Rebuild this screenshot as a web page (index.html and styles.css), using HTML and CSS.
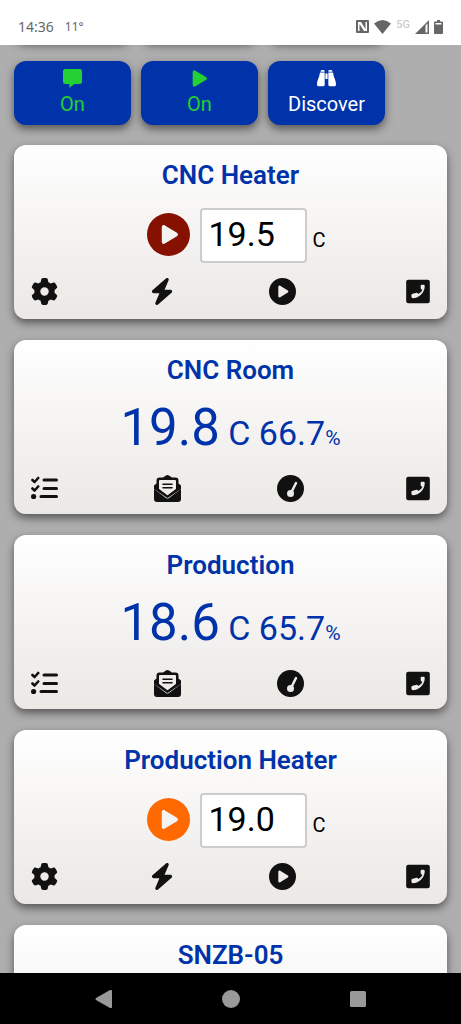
FILE: index.html
```html
<!DOCTYPE html>
<html lang="en">
<head>
<meta charset="utf-8">
<meta name="viewport" content="width=device-width, initial-scale=1">
<title>Heating control</title>
<link rel="stylesheet" href="styles.css">
</head>
<body>
<svg class="sprite" aria-hidden="true">
  <symbol id="gear" viewBox="0 0 512 512"><path d="M495.9 166.6c3.2 8.7 .5 18.4-6.4 24.6l-43.3 39.4c1.1 8.3 1.7 16.8 1.7 25.4s-.6 17.1-1.7 25.4l43.3 39.4c6.9 6.2 9.6 15.9 6.4 24.6c-4.4 11.9-9.7 23.3-15.8 34.3l-4.7 8.1c-6.6 11-14 21.4-22.1 31.2c-5.9 7.2-15.7 9.6-24.5 6.8l-55.7-17.7c-13.4 10.3-28.2 18.9-44 25.4l-12.5 57.1c-2 9.1-9 16.3-18.2 17.8c-13.8 2.3-28 3.5-42.5 3.5s-28.7-1.2-42.5-3.5c-9.2-1.5-16.2-8.7-18.2-17.8l-12.5-57.1c-15.8-6.5-30.6-15.1-44-25.4L83.1 425.9c-8.8 2.8-18.6 .3-24.5-6.8c-8.1-9.8-15.5-20.2-22.1-31.2l-4.7-8.1c-6.1-11-11.4-22.4-15.8-34.3c-3.2-8.7-.5-18.4 6.4-24.6l43.3-39.4C64.6 273.1 64 264.6 64 256s.6-17.1 1.7-25.4L22.4 191.2c-6.9-6.2-9.6-15.9-6.4-24.6c4.4-11.9 9.7-23.3 15.8-34.3l4.7-8.1c6.6-11 14-21.4 22.1-31.2c5.9-7.2 15.7-9.6 24.5-6.8l55.7 17.7c13.4-10.3 28.2-18.9 44-25.4l12.5-57.1c2-9.1 9-16.3 18.2-17.8C227.3 1.2 241.5 0 256 0s28.7 1.2 42.5 3.5c9.2 1.5 16.2 8.7 18.2 17.8l12.5 57.1c15.8 6.5 30.6 15.1 44 25.4l55.7-17.7c8.8-2.8 18.6-.3 24.5 6.8c8.1 9.8 15.5 20.2 22.1 31.2l4.7 8.1c6.1 11 11.4 22.4 15.8 34.3zM256 336a80 80 0 1 0 0-160 80 80 0 1 0 0 160z"/></symbol>
  <symbol id="bolt" viewBox="0 0 448 512"><path d="M349.4 44.6c5.9-13.7 1.5-29.7-10.6-38.5s-28.6-8-39.9 1.8l-256 224c-10 8.8-13.6 22.9-8.9 35.3S50.7 288 64 288H175.5L98.6 467.4c-5.9 13.7-1.5 29.7 10.6 38.5s28.6 8 39.9-1.8l256-224c10-8.8 13.6-22.9 8.9-35.3s-16.6-20.7-30-20.7H272.5L349.4 44.6z"/></symbol>
  <symbol id="circle-play" viewBox="0 0 512 512"><path d="M0 256a256 256 0 1 1 512 0A256 256 0 1 1 0 256zM188.3 147.1c-7.6 4.2-12.3 12.3-12.3 20.9V344c0 8.7 4.7 16.7 12.3 20.9s16.8 4.1 24.3-.5l144-88c7.1-4.4 11.5-12.1 11.5-20.5s-4.4-16.1-11.5-20.5l-144-88c-7.4-4.5-16.7-4.7-24.3-.5z"/></symbol>
  <symbol id="phone" viewBox="0 0 448 512"><path fill-rule="evenodd" d="M40 32H408A40 40 0 0 1 448 72V440A40 40 0 0 1 408 480H40A40 40 0 0 1 0 440V72A40 40 0 0 1 40 32ZM274 146L276 198Q278 212 290 216L309 223Q288 278 229 305L220 290Q212 278 200 281L122 298Q98 304 98 324L101 362Q104 382 122 383C252 380 350 282 352 152Q352 132 334 129L296 126Q276 126 274 146Z"/></symbol>
  <symbol id="checklist" viewBox="0 0 27 27"><g fill="none" stroke="currentColor" stroke-width="3" stroke-linecap="round" stroke-linejoin="round"><path d="M13 5H25.500M13 13.500H25.500M10 21.500H25.500"/><path stroke-width="2.600" d="M1.400 5L3.600 7 7.200 3M1.400 13.500L3.600 15.500 7.200 11.500"/></g><circle cx="2.600" cy="21.500" r="2.600"/></symbol>
  <symbol id="mail" viewBox="0 0 27 27"><path fill-rule="evenodd" d="M0 10.500L2.500 8.500V5.500Q2.500 2.500 5.500 2.500H9L12 .500Q13.500-.5 15 .500L18 2.500H21.500Q24.500 2.500 24.500 5.500V8.500L27 10.500V13L15 21.800Q13.500 23 12 21.800L0 13ZM5 6V14.300L13.500 20.600 22 14.300V6Q22 5 21 5H6Q5 5 5 6Z"/><path d="M0 14L12 23Q13.500 24 15 23L27 14V24A3 3 0 0 1 24 27H3A3 3 0 0 1 0 24Z"/><path d="M5 14L13.500 20.500 13.500 23 0 14V11ZM22 14L13.500 20.500V23L27 14V11Z"/><path fill="none" stroke="currentColor" stroke-width="1.600" d="M9 9.300H18M9 12.700H18" stroke-linecap="round"/></symbol>
  <symbol id="gauge" viewBox="0 0 27 27"><circle cx="13.500" cy="13.500" r="13.500"/><circle class="cutout" cx="13.500" cy="18.500" r="3.500"/><path class="cutout-line" d="M14.500 17L19 8"/></symbol>
  <symbol id="message" viewBox="0 0 21 21"><path d="M2.500 0H18.500A2.500 2.500 0 0 1 21 2.500V14A2.500 2.500 0 0 1 18.500 16.500H12.500L8 20.300Q7 21 7 20V16.500H2.500A2.500 2.500 0 0 1 0 14V2.500A2.500 2.500 0 0 1 2.500 0Z"/></symbol>
  <symbol id="play" viewBox="0 0 21 21"><path d="M3 3.500Q3 .3 6 1.800L18 9Q19.600 10.500 18 12L6 19.200Q3 20.700 3 17.500Z"/></symbol>
  <symbol id="binoculars" viewBox="0 0 21 21"><path d="M4 2.500Q4 1 5.500 1H7Q8.500 1 8.500 2.500V3H4ZM12.500 2.500Q12.500 1 14 1H15.500Q17 1 17 2.500V3H12.500ZM3.500 4H8.500V17.500Q8.500 19 7 19H1.500Q0 19 0 17.500C0 12 2.500 10 3 5ZM17.500 4H12.500V17.500Q12.500 19 14 19H19.500Q21 19 21 17.500C21 12 18.500 10 18 5ZM9.300 5H11.700V11H9.300Z"/></symbol>
</svg>

<header class="status">
  <span class="clock">14:36</span>
  <span class="temp">11°</span>
  <div class="signals">
    <svg width="13" height="13" viewBox="0 0 13 13"><path fill-rule="evenodd" d="M1 0H12Q13 0 13 1V12Q13 13 12 13H1Q0 13 0 12V1Q0 0 1 0ZM2 2V11H3.500V4L8 11H11V2H9.500V9L5 2Z"/></svg>
    <svg width="17" height="14" viewBox="0 0 17 14"><path d="M0 3.500Q8.500-3.500 17 3.500L8.500 14Z"/></svg>
    <span class="net">5G</span>
    <svg width="14" height="14" viewBox="0 0 14 14"><path fill-rule="evenodd" d="M14 0V14H0ZM10.500 5.500V12.500H12.500V3.500Z"/></svg>
    <svg width="9" height="14" viewBox="0 0 9 14"><path fill-rule="evenodd" d="M3 0H6V1.500H8Q9 1.500 9 2.500V13Q9 14 8 14H1Q0 14 0 13V2.500Q0 1.500 1 1.500H3ZM1.500 3V4.500H7.500V3Z"/></svg>
  </div>
</header>

<main class="view">
  <div class="content">
    <div class="row" aria-hidden="true"><div class="tile"></div><div class="tile"></div><div class="tile"></div></div>
    <div class="row">
      <button class="tile on"><svg class="tile-icon"><use href="#message"/></svg>On</button>
      <button class="tile on"><svg class="tile-icon"><use href="#play"/></svg>On</button>
      <button class="tile"><svg class="tile-icon"><use href="#binoculars"/></svg>Discover</button>
    </div>

    <section class="card">
      <h2>CNC Heater</h2>
      <div class="setting">
        <button class="run idle" aria-label="Run"><svg><use href="#circle-play"/></svg></button>
        <input id="t1" type="text" inputmode="decimal" value="19.5" aria-label="CNC Heater temperature">
        <label for="t1">C</label>
      </div>
      <div class="actions">
        <button aria-label="Settings"><svg><use href="#gear"/></svg></button>
        <button aria-label="Power"><svg class="narrow"><use href="#bolt"/></svg></button>
        <button aria-label="Start"><svg><use href="#circle-play"/></svg></button>
        <button aria-label="Call"><svg class="narrow"><use href="#phone"/></svg></button>
      </div>
    </section>

    <section class="card">
      <h2>CNC Room</h2>
      <p class="reading"><span class="big">19.8</span> C 66.7<span class="unit">%</span></p>
      <div class="actions even">
        <button aria-label="Rules"><svg><use href="#checklist"/></svg></button>
        <button aria-label="Messages"><svg><use href="#mail"/></svg></button>
        <button aria-label="Gauge"><svg><use href="#gauge"/></svg></button>
        <button aria-label="Call"><svg class="narrow"><use href="#phone"/></svg></button>
      </div>
    </section>

    <section class="card">
      <h2>Production</h2>
      <p class="reading"><span class="big">18.6</span> C 65.7<span class="unit">%</span></p>
      <div class="actions even">
        <button aria-label="Rules"><svg><use href="#checklist"/></svg></button>
        <button aria-label="Messages"><svg><use href="#mail"/></svg></button>
        <button aria-label="Gauge"><svg><use href="#gauge"/></svg></button>
        <button aria-label="Call"><svg class="narrow"><use href="#phone"/></svg></button>
      </div>
    </section>

    <section class="card">
      <h2>Production Heater</h2>
      <div class="setting">
        <button class="run active" aria-label="Run"><svg><use href="#circle-play"/></svg></button>
        <input id="t2" type="text" inputmode="decimal" value="19.0" aria-label="Production Heater temperature">
        <label for="t2">C</label>
      </div>
      <div class="actions">
        <button aria-label="Settings"><svg><use href="#gear"/></svg></button>
        <button aria-label="Power"><svg class="narrow"><use href="#bolt"/></svg></button>
        <button aria-label="Start"><svg><use href="#circle-play"/></svg></button>
        <button aria-label="Call"><svg class="narrow"><use href="#phone"/></svg></button>
      </div>
    </section>

    <section class="card">
      <h2>SNZB-05</h2>
    </section>
  </div>
</main>

<nav class="navbar">
  <button aria-label="Back"><svg width="18" height="18" viewBox="0 0 18 18"><path d="M1 8Q0 9 1 10L15 18Q17 18.500 17 17V1Q17-.5 15 0Z"/></svg></button>
  <button aria-label="Home"><svg width="18" height="18" viewBox="0 0 18 18"><circle cx="9" cy="9" r="9"/></svg></button>
  <button aria-label="Recent apps"><svg width="18" height="18" viewBox="0 0 18 18"><rect x="1" y="1" width="16" height="16" rx="1.500"/></svg></button>
</nav>
</body>
</html>
```
FILE: styles.css
```css
* {
  box-sizing: border-box;
}

body {
  margin: 0;
  height: 100vh;
  display: flex;
  flex-direction: column;
  overflow: hidden;
  font-family: Roboto, sans-serif;
  color: #000;
  background: #aeaeae;
}

button {
  padding: 0;
  border: 0;
  background: none;
  font: inherit;
  color: inherit;
}

svg {
  display: block;
  fill: currentColor;
}

.sprite {
  position: absolute;
  width: 0;
  height: 0;
}

.status {
  flex: none;
  display: flex;
  align-items: center;
  gap: 11px;
  height: 45px;
  padding: 8px 18px 0;
  background: #fff;
  color: #666;
}

.clock {
  font-family: "Noto Sans", sans-serif;
  font-size: 14px;
}

.temp {
  font-family: "Noto Sans", sans-serif;
  font-size: 12px;
}

.signals {
  display: flex;
  align-items: center;
  gap: 5px;
  margin-left: auto;
}

.net {
  align-self: flex-start;
  font-size: 11px;
  line-height: 10px;
  font-weight: 500;
  color: #ccc;
}

.view {
  flex: 1;
  min-height: 0;
  overflow: hidden;
}

.content {
  margin-top: -68px;
  padding: 0 14px;
}

.row {
  display: flex;
  gap: 10px;
  margin-bottom: 20px;
}

.tile {
  display: flex;
  flex-direction: column;
  align-items: center;
  gap: 3px;
  width: 117px;
  height: 64px;
  padding: 8px 0;
  border-radius: 12px;
  background: #0033a9;
  color: #fff;
  font-size: 20px;
  line-height: 26px;
  box-shadow: 0 4px 8px rgba(0, 0, 0, 0.5);
}

.on {
  color: #24d132;
}

.tile-icon {
  width: 21px;
  height: 21px;
}

.card {
  height: 174px;
  margin-bottom: 21px;
  padding: 14px 17px;
  border-radius: 12px;
  background: linear-gradient(#fff, #ebe8e5);
  box-shadow: 0 4px 8px rgba(0, 0, 0, 0.5);
}

h2 {
  margin: 0;
  font-size: 26px;
  line-height: 32px;
  font-weight: 600;
  text-align: center;
  color: #0033a9;
}

.setting {
  display: flex;
  align-items: center;
  justify-content: center;
  height: 54px;
  margin-top: 17px;
  padding-left: 12px;
}

.run {
  padding-bottom: 2px;
}

.run svg {
  width: 43px;
  height: 43px;
}

.idle {
  color: #861100;
}

.active {
  color: #ff6a00;
}

.setting input {
  width: 107px;
  height: 55px;
  margin: 0 5px 0 10px;
  padding: 0 6px 2px;
  border: 2px solid #ccc;
  border-radius: 4px;
  background: #fff;
  font: 34px Roboto, sans-serif;
  color: #000;
}

.setting label {
  padding-top: 9px;
  font-size: 20px;
  line-height: 24px;
}

.reading {
  margin: 10px 0 0;
  height: 64px;
  line-height: 64px;
  font-size: 34px;
  text-align: center;
  color: #0033a9;
}

.big {
  font-size: 51px;
}

.unit {
  font-size: 21px;
}

.actions {
  display: grid;
  grid-template-columns: 119fr 119fr 137fr auto;
  justify-items: start;
  margin-top: 16px;
  color: #111;
}

.even {
  grid-template-columns: 123fr 123fr 129fr auto;
  margin-top: 15px;
}

.actions svg {
  width: 27px;
  height: 27px;
}

.actions .narrow {
  width: 24px;
}

.cutout {
  fill: #edebe8;
}

.cutout-line {
  fill: none;
  stroke: #edebe8;
  stroke-width: 2.500;
  stroke-linecap: round;
}

.navbar {
  flex: none;
  display: flex;
  align-items: center;
  justify-content: center;
  gap: 109px;
  height: 51px;
  background: #000;
  color: #999;
}
```
